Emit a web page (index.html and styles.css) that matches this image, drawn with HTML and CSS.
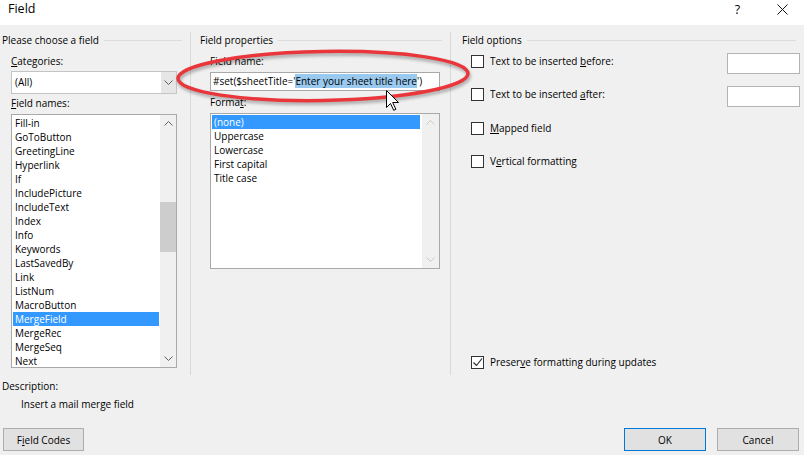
FILE: index.html
```html
<!DOCTYPE html>
<html lang="en">
<head>
<meta charset="utf-8">
<title>Field</title>
<link rel="stylesheet" href="styles.css">
</head>
<body>
<div class="titlebar">
  <span class="title">Field</span>
  <span class="tbtn help">?</span>
  <span class="tbtn close"><svg width="11" height="11" viewBox="0 0 11 11"><path d="M.5.5l10 10M10.5.5l-10 10" stroke="#111" stroke-width="1" fill="none"/></svg></span>
</div>

<div class="main">
  <section class="col col-left">
    <div class="group-head"><span>Please choose a field</span><i class="rule"></i></div>
    <div class="col-body">
      <div class="lbl lbl-cat"><u>C</u>ategories:</div>
      <div class="combo">
        <span class="combo-text">(All)</span>
        <span class="combo-btn"><svg width="9" height="5" viewBox="0 0 9 5"><path d="M.5.5l4 4 4-4" fill="none" stroke="#606060"/></svg></span>
      </div>
      <div class="lbl lbl-names"><u>F</u>ield names:</div>
      <div class="listbox names">
        <ul class="items">
          <li>Fill-in</li>
          <li>GoToButton</li>
          <li>GreetingLine</li>
          <li>Hyperlink</li>
          <li>If</li>
          <li>IncludePicture</li>
          <li>IncludeText</li>
          <li>Index</li>
          <li>Info</li>
          <li>Keywords</li>
          <li>LastSavedBy</li>
          <li>Link</li>
          <li>ListNum</li>
          <li>MacroButton</li>
          <li class="sel">MergeField</li>
          <li>MergeRec</li>
          <li>MergeSeq</li>
          <li>Next</li>
        </ul>
        <div class="vscroll">
          <span class="arrow"><svg width="9" height="5" viewBox="0 0 9 5"><path d="M.5 4.5l4-4 4 4" fill="none" stroke="#606060"/></svg></span>
          <div class="track"><div class="thumb"></div></div>
          <span class="arrow"><svg width="9" height="5" viewBox="0 0 9 5"><path d="M.5.5l4 4 4-4" fill="none" stroke="#606060"/></svg></span>
        </div>
      </div>
    </div>
  </section>

  <section class="col col-mid">
    <div class="group-head"><span>Field properties</span><i class="rule"></i></div>
    <div class="col-body">
      <div class="lbl lbl-fname">Field name:</div>
      <div class="textbox"><span>#set($sheetTitle='</span><span class="hl">Enter your sheet title here</span><span>')</span></div>
      <div class="lbl lbl-format">Forma<u>t</u>:</div>
      <div class="listbox format">
        <ul class="items">
          <li class="sel">(none)</li>
          <li>Uppercase</li>
          <li>Lowercase</li>
          <li>First capital</li>
          <li>Title case</li>
        </ul>
        <div class="vscroll disabled">
          <span class="arrow"><svg width="9" height="5" viewBox="0 0 9 5"><path d="M.5 4.5l4-4 4 4" fill="none" stroke="#c8c8c8"/></svg></span>
          <div class="track"></div>
          <span class="arrow"><svg width="9" height="5" viewBox="0 0 9 5"><path d="M.5.5l4 4 4-4" fill="none" stroke="#c8c8c8"/></svg></span>
        </div>
      </div>
    </div>
  </section>

  <section class="col col-right">
    <div class="group-head"><span>Field options</span><i class="rule"></i></div>
    <div class="col-body opts">
      <div class="opt opt-1"><span class="cb"></span><span class="opt-lbl">Text to be inserted <u>b</u>efore:</span><span class="opt-input"></span></div>
      <div class="opt opt-2"><span class="cb"></span><span class="opt-lbl">Text to be inserted <u>a</u>fter:</span><span class="opt-input"></span></div>
      <div class="opt opt-3"><span class="cb"></span><span class="opt-lbl"><u>M</u>apped field</span></div>
      <div class="opt opt-4"><span class="cb"></span><span class="opt-lbl">V<u>e</u>rtical formatting</span></div>
      <div class="opt opt-keep"><span class="cb checked"><svg width="11" height="11" viewBox="0 0 11 11"><path d="M1.5 5.5l3 3 5.5-7" fill="none" stroke="#222" stroke-width="1.1"/></svg></span><span class="opt-lbl">Preser<u>v</u>e formatting during updates</span></div>
    </div>
  </section>
</div>

<div class="desc">
  <div class="desc-lbl">Description:</div>
  <div class="desc-text">Insert a mail merge field</div>
</div>

<div class="footer">
  <button class="btn btn-codes">F<u>i</u>eld Codes</button>
  <button class="btn btn-ok">OK</button>
  <button class="btn btn-cancel">Cancel</button>
</div>

<svg class="annot" width="320" height="70" viewBox="0 0 320 70">
  <defs>
    <filter id="blur" x="-10%" y="-30%" width="120%" height="160%"><feGaussianBlur stdDeviation="1.4"/></filter>
  </defs>
  <ellipse cx="155" cy="35" rx="145" ry="24.5" transform="rotate(-1 155 35) translate(1 2.5)" fill="none" stroke="rgba(0,0,0,0.28)" stroke-width="4" filter="url(#blur)"/>
  <ellipse cx="155" cy="35" rx="145" ry="24.5" transform="rotate(-1 155 35)" fill="none" stroke="#e8363b" stroke-width="3.5"/>
</svg>

<svg class="cursor" width="14" height="22" viewBox="0 0 14 22">
  <path d="M1.5 1.5v17l4-4 3.2 6.8 2.2-1-3.2-6.8h5.8z" fill="#fff" stroke="#000" stroke-width="1" stroke-linejoin="miter"/>
</svg>
</body>
</html>
```

FILE: styles.css
```css
html, body {
  margin: 0;
  padding: 0;
}
body {
  width: 804px;
  height: 455px;
  background: #f0f0f0;
  font-family: "Open Sans", "Noto Sans", sans-serif;
  font-size: 10px;
  color: #000;
  position: relative;
  overflow: hidden;
}
u { text-decoration: underline; text-underline-offset: 1px; }

/* title bar */
.titlebar {
  height: 25px;
  background: #fff;
  display: flex;
  align-items: flex-start;
}
.title {
  flex: 1;
  font-size: 12.5px;
  line-height: 16px;
  padding: 1px 0 0 8px;
}
.tbtn {
  display: flex;
  justify-content: center;
  align-items: center;
  height: 19px;
  font-size: 12.5px;
}
.help { width: 45px; }
.close { width: 44px; }

/* main grid */
.main {
  display: grid;
  grid-template-columns: 191px 260px 1fr;
  height: 350px;
  padding-top: 7px;
  box-sizing: border-box;
}
.col {
  display: flex;
  flex-direction: column;
  padding-top: 1px;
  box-sizing: border-box;
  border-right: 1px solid #d9d9d9;
}
.col-right { border-right: none; padding-bottom: 6px; }

.group-head {
  display: flex;
  align-items: center;
  height: 14px;
  line-height: 14px;
  white-space: nowrap;
}
.col-left .group-head { padding-left: 2px; }
.col-mid .group-head { padding-left: 9px; }
.col-right .group-head { padding-left: 11px; }
.rule {
  flex: 1;
  height: 1px;
  background: #dcdcdc;
  margin: 1px 8px 0 5px;
}

.col-body { display: flex; flex-direction: column; }
.col-left .col-body { padding-left: 11px; }
.col-mid .col-body { padding-left: 19px; }

.lbl { height: 14px; line-height: 14px; white-space: nowrap; }
.lbl-cat { margin-top: 7px; }
.lbl-names { margin-top: 2px; }
.lbl-fname { margin-top: 7px; }
.lbl-format { margin-top: 4px; }

/* combo */
.combo {
  margin-top: 3px;
  width: 166px;
  height: 23px;
  box-sizing: border-box;
  border: 1px solid #c4c4c4;
  background: #fff;
  display: flex;
  align-items: stretch;
}
.combo-text { flex: 1; padding-left: 3px; line-height: 21px; }
.combo-btn {
  width: 15px;
  background: #e6e6e6;
  display: flex;
  align-items: center;
  justify-content: center;
}

/* listboxes */
.listbox {
  margin-top: 4px;
  display: flex;
  box-sizing: border-box;
  border: 1px solid #a9a9a9;
  background: #fff;
  overflow: hidden;
}
.names { width: 166px; height: 254px; }
.format { margin-top: 4px; width: 230px; height: 156px; }
.items {
  flex: 1;
  list-style: none;
  margin: 0;
  padding: 1px;
  overflow: hidden;
}
.items li {
  height: 14px;
  line-height: 14px;
  padding-left: 2px;
  white-space: nowrap;
}
.items li.sel { background: #3399ff; color: #fff; }
.format .items li.sel { margin-right: 1px; }

.vscroll {
  width: 16px;
  background: #f0f0f0;
  display: flex;
  flex-direction: column;
}
.format .vscroll { width: 17px; }
.arrow {
  height: 17px;
  display: flex;
  align-items: center;
  justify-content: center;
}
.track { flex: 1; }
.thumb {
  margin-top: 70px;
  height: 50px;
  background: #cdcdcd;
}

/* text box */
.textbox {
  margin-top: 4px;
  width: 230px;
  height: 19px;
  box-sizing: border-box;
  border: 1px solid #a9a9a9;
  background: #fff;
  line-height: 16px;
  padding-left: 2px;
  white-space: nowrap;
  overflow: hidden;
}
.hl { background: #99c9ef; }

/* options */
.opts { padding-left: 20px; height: 100%; }
.col-right .col-body { flex: 1; }
.opt {
  display: flex;
  align-items: flex-start;
  height: 14px;
  line-height: 14px;
  white-space: nowrap;
}
.opt-1 { margin-top: 7px; }
.opt-2 { margin-top: 19px; }
.opt-3 { margin-top: 20px; }
.opt-4 { margin-top: 19px; }
.opt-keep { margin-top: auto; }
.cb {
  width: 13px;
  height: 13px;
  box-sizing: border-box;
  border: 1px solid #333;
  background: #fff;
  margin-top: 1px;
  display: flex;
  align-items: center;
  justify-content: center;
}
.opt-lbl { margin-left: 6px; }
.opt-input {
  margin-left: auto;
  margin-right: 4px;
  margin-top: -1px;
  width: 73px;
  height: 21px;
  box-sizing: border-box;
  border: 1px solid #b4b4b4;
  background: #fff;
}

/* description */
.desc { padding-top: 4px; }
.desc-lbl { padding-left: 2px; height: 14px; line-height: 14px; }
.desc-text { padding-left: 21px; margin-top: 4px; height: 14px; line-height: 14px; }

/* footer */
.footer {
  display: flex;
  margin-top: 17px;
}
.btn {
  height: 23px;
  box-sizing: border-box;
  border: 1px solid #adadad;
  background: #e1e1e1;
  font: inherit;
  color: #000;
  padding: 0;
}
.btn-codes { margin-left: 3px; width: 81px; }
.btn-ok { margin-left: auto; width: 82px; border-color: #0078d7; }
.btn-cancel { margin-left: 11px; margin-right: 5px; width: 82px; }

/* annotations */
.annot {
  position: absolute;
  left: 168px;
  top: 41px;
  pointer-events: none;
}
.cursor {
  position: absolute;
  left: 385px;
  top: 89px;
  pointer-events: none;
}
```
